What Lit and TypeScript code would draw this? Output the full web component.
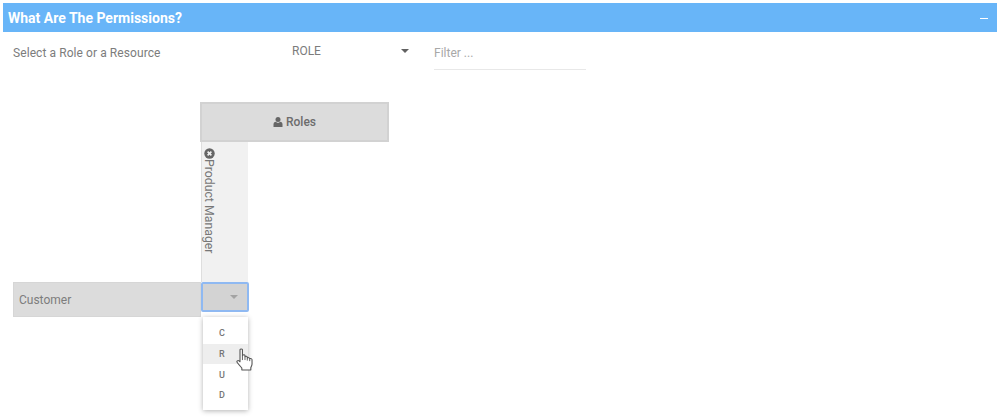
import { LitElement, html, css } from "lit";
import { customElement } from "lit/decorators.js";

@customElement("app-root")
export class AppRoot extends LitElement {
  static styles = css`
    :host { display: block; width: 1000px; height: 417px; overflow: hidden; background: #fff; font-family: Roboto, "Liberation Sans", sans-serif; color: #7c7c7c; font-size: 12px; box-sizing: border-box; padding: 3px 3px 0; }
    .head { height: 29px; background: #68b5f8; color: #fff; display: flex; align-items: center; justify-content: space-between; padding: 0 9px 0 5px; font-size: 14px; font-weight: 700; }
    .dash { width: 8px; height: 1px; background: #fff; margin-top: 2px; }
    .filters { display: flex; height: 38px; padding-left: 10px; }
    .label { width: 279px; padding-top: 14px; line-height: 14px; font-size: 12px; letter-spacing: 0.08px; }
    .select { width: 118px; margin-right: 24px; padding: 12px 0 0 0; display: flex; justify-content: space-between; line-height: 14px; font-size: 12px; }
    .select .caret { margin: 5px 1px 0 0; }
    .caret { width: 0; height: 0; border: 4px solid transparent; border-top-color: #616161; border-bottom: 0; }
    .filter { width: 152px; height: 38px; padding-top: 14px; box-sizing: border-box; border-bottom: 1px solid #e8e8e8; color: #a8a8a8; font-size: 12px; line-height: 14px; }
    .matrix { margin: 32px 0 0 10px; display: grid; grid-template-columns: 188px 48px 140px; grid-template-rows: 40px 140px 35px; position: relative; width: 376px; }
    .roles { grid-column: 2 / 4; grid-row: 1; margin-left: -1px; background: #dcdcdc; border: 2px solid #d2d2d2; display: flex; align-items: center; justify-content: center; gap: 3px; font-weight: 500; font-size: 12px; color: #6c6c6c; box-sizing: border-box; }
    .role { grid-column: 2; grid-row: 2; background: #f1f1f1; border-left: 1px solid #dedede; width: 47px; box-sizing: border-box; padding-top: 6px; display: flex; flex-direction: column; align-items: flex-start; padding-left: 2px; }
    .role span { writing-mode: vertical-rl; font-size: 12.3px; line-height: 14px; color: #777; margin: 0 0 0 -2px; }
    .customer { grid-column: 1; grid-row: 3; background: #dcdcdc; border: 1px solid #d6d6d6; box-sizing: border-box; display: flex; align-items: center; padding-left: 5px; font-size: 12px; color: #7c7c7c; }
    .cell { grid-column: 2; grid-row: 3; height: 30px; box-sizing: border-box; border: 2px solid #8fb9f2; border-radius: 2px; background: #d3d3d3; display: flex; align-items: center; justify-content: flex-end; padding-right: 9px; }
    .cell .caret { border-top-color: #a3a3a3; }
    .menu { position: absolute; left: 190px; top: 215px; width: 45px; height: 93px; background: #fff; box-shadow: 0 1px 5px rgba(0,0,0,.3); padding-top: 6px; box-sizing: border-box; font-size: 9px; font-weight: 500; color: #757575; }
    .menu div { height: 20.7px; display: flex; align-items: center; padding-left: 16px; }
    .menu .on { background: #eee; }
    .hand { position: absolute; left: 223px; top: 246px; }
  `;

  render() {
    return html`
      <div class="head"><span>What Are The Permissions?</span><span class="dash"></span></div>
      <div class="filters">
        <div class="label">Select a Role or a Resource</div>
        <div class="select"><span>ROLE</span><span class="caret"></span></div>
        <div class="filter">Filter ...</div>
      </div>
      <div class="matrix">
        <div class="roles">
          <svg width="10" height="10" viewBox="0 0 10 10"><circle cx="5" cy="2.6" r="2.5" fill="#666"/><path d="M0.5 10 V7 Q0.5 5 2.5 4.8 L5 6 L7.5 4.8 Q9.5 5 9.5 7 V10 Z" fill="#666"/></svg>
          Roles
        </div>
        <div class="role">
          <svg width="11" height="11" viewBox="0 0 11 11"><circle cx="5.5" cy="5.5" r="5.2" fill="#666"/><path d="M3.6 3.6 L7.4 7.4 M7.4 3.6 L3.6 7.4" stroke="#f1f1f1" stroke-width="1.6"/></svg>
          <span>Product Manager</span>
        </div>
        <div class="customer">Customer</div>
        <div class="cell"><span class="caret"></span></div>
        <div class="menu">
          <div>C</div><div class="on">R</div><div>U</div><div>D</div>
        </div>
        <svg class="hand" width="17" height="23" viewBox="0 0 14 21" preserveAspectRatio="none">
          <path d="M3.3 1.6 C3.3 .6 5.3 .6 5.3 1.6 V7.5 L5.6 6.6 C6 5.8 7.4 6 7.4 7 V8 C7.8 7.2 9.3 7.4 9.3 8.5 V9.2 C9.8 8.5 11.2 8.7 11.3 9.8 C12 9.3 13.2 9.6 13.2 10.8 V14.5 C13.2 16 12.4 17 12.2 18 V20 H4.8 V18.3 C3.8 17 2.6 15.5 1 13.2 C.2 12 1.6 10.8 2.5 11.7 L3.3 12.6 Z" fill="#fff" stroke="#555" stroke-width=".9" stroke-linejoin="round"/>
          <path d="M5.3 7.5 V11 M7.4 8 V11 M9.3 9 V11.5 M11.3 9.8 V12" stroke="#555" stroke-width=".8" fill="none"/>
        </svg>
      </div>
    `;
  }
}
